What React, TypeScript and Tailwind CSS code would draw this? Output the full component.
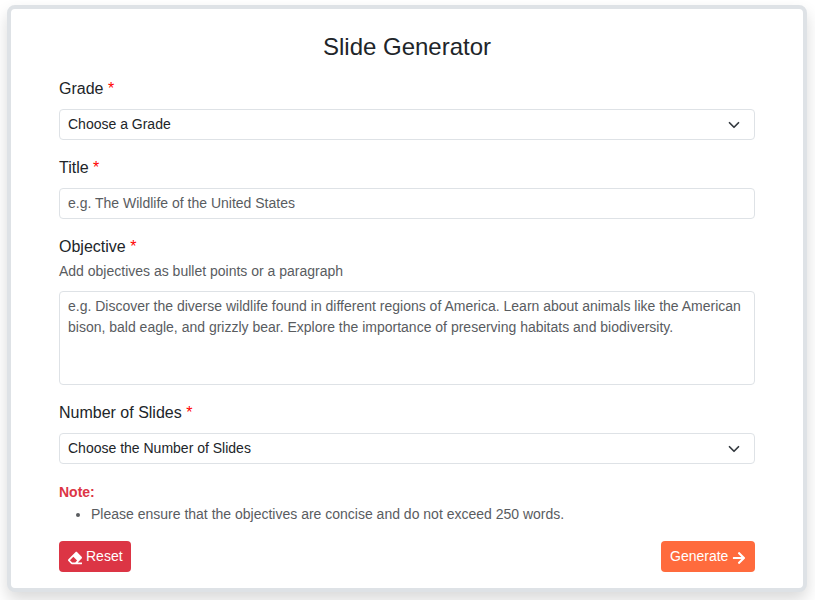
import type { ReactNode } from "react";
import { FaArrowRight, FaEraser } from "react-icons/fa";

function Label({ children }: { children: ReactNode }) {
  return (
    <label className="block text-base leading-6 text-[#212529]">
      {children} <span className="text-[#ff0000]">*</span>
    </label>
  );
}

function Select({ children }: { children: ReactNode }) {
  return (
    <button
      type="button"
      className="mt-2 flex h-[31px] w-full items-center justify-between rounded-[4px] border border-[#dee2e6] bg-white pr-[13px] pl-2 text-left leading-[21px] text-[#212529]"
    >
      <span>{children}</span>
      <svg viewBox="0 0 16 16" className="mt-px h-3 w-[14px]" fill="none" stroke="#343a40" strokeWidth="2.3" strokeLinecap="round" strokeLinejoin="round">
        <path d="m2 5 6 6 6-6" />
      </svg>
    </button>
  );
}

export default function App() {
  return (
    <div className="h-[600px] overflow-hidden bg-white pt-[5px] pl-[7px] font-['Liberation_Sans',Arial,sans-serif] text-sm leading-[21px]">
      <main className="h-[587px] w-[800px] rounded-[8px] border-4 border-[#dee2e6] bg-white px-12 pt-[23px] shadow-[0_8px_16px_rgba(0,0,0,0.15)]">
        <h1 className="mb-4 h-[29px] text-center text-2xl leading-[29px] text-[#212529]">Slide Generator</h1>

        <div className="mb-4">
          <Label>Grade</Label>
          <Select>Choose a Grade</Select>
        </div>

        <div className="mb-4">
          <Label>Title</Label>
          <input
            className="mt-2 block h-[31px] w-full rounded-[4px] border border-[#dee2e6] px-2 pb-[2px] leading-[21px] placeholder:text-[#595c5f]"
            placeholder="e.g. The Wildlife of the United States"
          />
        </div>

        <div className="mb-4">
          <Label>Objective</Label>
          <p className="mt-[2px] text-[#595c5f]">Add objectives as bullet points or a paragraph</p>
          <textarea
            className="mt-[9px] block h-[94px] w-full resize-none rounded-[4px] border border-[#dee2e6] px-2 py-1 leading-[21px] placeholder:text-[#595c5f]"
            placeholder="e.g. Discover the diverse wildlife found in different regions of America. Learn about animals like the American bison, bald eagle, and grizzly bear. Explore the importance of preserving habitats and biodiversity."
          />
        </div>

        <div className="mb-[18px]">
          <Label>Number of Slides</Label>
          <Select>Choose the Number of Slides</Select>
        </div>

        <p className="font-bold text-[#dc3545]">Note:</p>
        <ul className="mb-4 list-disc pt-px pl-8 text-[#595c5f]">
          <li>Please ensure that the objectives are concise and do not exceed 250 words.</li>
        </ul>

        <div className="flex justify-between text-white">
          <button type="button" className="flex h-[31px] w-[72px] items-center gap-1 rounded-[4px] bg-[#dc3545] pl-[9px]">
            <FaEraser className="mt-[3px] size-[14px] shrink-0" />
            Reset
          </button>
          <button type="button" className="flex h-[31px] w-[94px] items-center gap-1 rounded-[4px] bg-[#ff6b3d] pl-[9px]">
            Generate
            <FaArrowRight className="mt-[3px] size-[14px] shrink-0" />
          </button>
        </div>
      </main>
    </div>
  );
}
